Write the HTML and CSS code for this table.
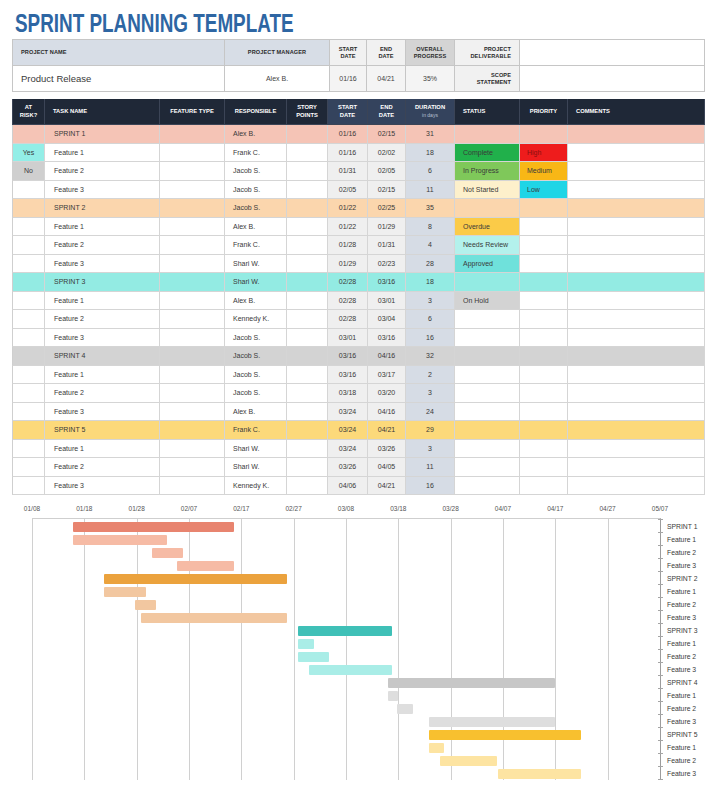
FILE: index.html
```html
<!DOCTYPE html>
<html lang="en">
<head>
<meta charset="utf-8">
<title>Sprint Planning Template</title>
<link rel="stylesheet" href="styles.css">
</head>
<body>
<div class="page">
  <h1 class="title">SPRINT PLANNING TEMPLATE</h1>

  <div class="info">
    <div class="c lbl hb first">PROJECT NAME</div>
    <div class="c lbl hb ctr">PROJECT MANAGER</div>
    <div class="c lbl hl ctr">START<br>DATE</div>
    <div class="c lbl hl ctr">END<br>DATE</div>
    <div class="c lbl hg ctr">OVERALL<br>PROGRESS</div>
    <div class="c lbl hl rgt">PROJECT<br>DELIVERABLE</div>
    <div class="c"></div>
    <div class="c val big first">Product Release</div>
    <div class="c val ctr">Alex B.</div>
    <div class="c val ctr lt">01/16</div>
    <div class="c val ctr lt">04/21</div>
    <div class="c val ctr lt">35%</div>
    <div class="c lbl hl rgt">SCOPE<br>STATEMENT</div>
    <div class="c"></div>
  </div>

  <div class="tbl">
    <div class="tr th">
      <div class="td ctr"><span>AT<br>RISK?</span></div>
      <div class="td"><span>TASK NAME</span></div>
      <div class="td ctr"><span>FEATURE TYPE</span></div>
      <div class="td ctr"><span>RESPONSIBLE</span></div>
      <div class="td ctr"><span>STORY<br>POINTS</span></div>
      <div class="td ctr hd"><span>START<br>DATE</span></div>
      <div class="td ctr hd"><span>END<br>DATE</span></div>
      <div class="td ctr hd"><span>DURATION<br><span class="sub">in days</span></span></div>
      <div class="td"><span>STATUS</span></div>
      <div class="td ctr"><span>PRIORITY</span></div>
      <div class="td"><span>COMMENTS</span></div>
    </div>

    <div class="tr sp1"><div class="td ar"></div><div class="td tn">SPRINT 1</div><div class="td"></div><div class="td">Alex B.</div><div class="td"></div><div class="td dt">01/16</div><div class="td dt">02/15</div><div class="td du">31</div><div class="td"></div><div class="td pr"></div><div class="td"></div></div>
    <div class="tr"><div class="td ar yes">Yes</div><div class="td tn">Feature 1</div><div class="td"></div><div class="td">Frank C.</div><div class="td"></div><div class="td dt">01/16</div><div class="td dt">02/02</div><div class="td du">18</div><div class="td s-complete">Complete</div><div class="td pr p-high">High</div><div class="td"></div></div>
    <div class="tr"><div class="td ar no">No</div><div class="td tn">Feature 2</div><div class="td"></div><div class="td">Jacob S.</div><div class="td"></div><div class="td dt">01/31</div><div class="td dt">02/05</div><div class="td du">6</div><div class="td s-progress">In Progress</div><div class="td pr p-medium">Medium</div><div class="td"></div></div>
    <div class="tr"><div class="td ar"></div><div class="td tn">Feature 3</div><div class="td"></div><div class="td">Jacob S.</div><div class="td"></div><div class="td dt">02/05</div><div class="td dt">02/15</div><div class="td du">11</div><div class="td s-notstarted">Not Started</div><div class="td pr p-low">Low</div><div class="td"></div></div>

    <div class="tr sp2"><div class="td ar"></div><div class="td tn">SPRINT 2</div><div class="td"></div><div class="td">Jacob S.</div><div class="td"></div><div class="td dt">01/22</div><div class="td dt">02/25</div><div class="td du">35</div><div class="td"></div><div class="td pr"></div><div class="td"></div></div>
    <div class="tr"><div class="td ar"></div><div class="td tn">Feature 1</div><div class="td"></div><div class="td">Alex B.</div><div class="td"></div><div class="td dt">01/22</div><div class="td dt">01/29</div><div class="td du">8</div><div class="td s-overdue">Overdue</div><div class="td pr"></div><div class="td"></div></div>
    <div class="tr"><div class="td ar"></div><div class="td tn">Feature 2</div><div class="td"></div><div class="td">Frank C.</div><div class="td"></div><div class="td dt">01/28</div><div class="td dt">01/31</div><div class="td du">4</div><div class="td s-review">Needs Review</div><div class="td pr"></div><div class="td"></div></div>
    <div class="tr"><div class="td ar"></div><div class="td tn">Feature 3</div><div class="td"></div><div class="td">Shari W.</div><div class="td"></div><div class="td dt">01/29</div><div class="td dt">02/23</div><div class="td du">28</div><div class="td s-approved">Approved</div><div class="td pr"></div><div class="td"></div></div>

    <div class="tr sp3"><div class="td ar"></div><div class="td tn">SPRINT 3</div><div class="td"></div><div class="td">Shari W.</div><div class="td"></div><div class="td dt">02/28</div><div class="td dt">03/16</div><div class="td du">18</div><div class="td"></div><div class="td pr"></div><div class="td"></div></div>
    <div class="tr"><div class="td ar"></div><div class="td tn">Feature 1</div><div class="td"></div><div class="td">Alex B.</div><div class="td"></div><div class="td dt">02/28</div><div class="td dt">03/01</div><div class="td du">3</div><div class="td s-hold">On Hold</div><div class="td pr"></div><div class="td"></div></div>
    <div class="tr"><div class="td ar"></div><div class="td tn">Feature 2</div><div class="td"></div><div class="td">Kennedy K.</div><div class="td"></div><div class="td dt">02/28</div><div class="td dt">03/04</div><div class="td du">6</div><div class="td"></div><div class="td pr"></div><div class="td"></div></div>
    <div class="tr"><div class="td ar"></div><div class="td tn">Feature 3</div><div class="td"></div><div class="td">Jacob S.</div><div class="td"></div><div class="td dt">03/01</div><div class="td dt">03/16</div><div class="td du">16</div><div class="td"></div><div class="td pr"></div><div class="td"></div></div>

    <div class="tr sp4"><div class="td ar"></div><div class="td tn">SPRINT 4</div><div class="td"></div><div class="td">Jacob S.</div><div class="td"></div><div class="td dt">03/16</div><div class="td dt">04/16</div><div class="td du">32</div><div class="td"></div><div class="td pr"></div><div class="td"></div></div>
    <div class="tr"><div class="td ar"></div><div class="td tn">Feature 1</div><div class="td"></div><div class="td">Jacob S.</div><div class="td"></div><div class="td dt">03/16</div><div class="td dt">03/17</div><div class="td du">2</div><div class="td"></div><div class="td pr"></div><div class="td"></div></div>
    <div class="tr"><div class="td ar"></div><div class="td tn">Feature 2</div><div class="td"></div><div class="td">Jacob S.</div><div class="td"></div><div class="td dt">03/18</div><div class="td dt">03/20</div><div class="td du">3</div><div class="td"></div><div class="td pr"></div><div class="td"></div></div>
    <div class="tr"><div class="td ar"></div><div class="td tn">Feature 3</div><div class="td"></div><div class="td">Alex B.</div><div class="td"></div><div class="td dt">03/24</div><div class="td dt">04/16</div><div class="td du">24</div><div class="td"></div><div class="td pr"></div><div class="td"></div></div>

    <div class="tr sp5"><div class="td ar"></div><div class="td tn">SPRINT 5</div><div class="td"></div><div class="td">Frank C.</div><div class="td"></div><div class="td dt">03/24</div><div class="td dt">04/21</div><div class="td du">29</div><div class="td"></div><div class="td pr"></div><div class="td"></div></div>
    <div class="tr"><div class="td ar"></div><div class="td tn">Feature 1</div><div class="td"></div><div class="td">Shari W.</div><div class="td"></div><div class="td dt">03/24</div><div class="td dt">03/26</div><div class="td du">3</div><div class="td"></div><div class="td pr"></div><div class="td"></div></div>
    <div class="tr"><div class="td ar"></div><div class="td tn">Feature 2</div><div class="td"></div><div class="td">Shari W.</div><div class="td"></div><div class="td dt">03/26</div><div class="td dt">04/05</div><div class="td du">11</div><div class="td"></div><div class="td pr"></div><div class="td"></div></div>
    <div class="tr"><div class="td ar"></div><div class="td tn">Feature 3</div><div class="td"></div><div class="td">Kennedy K.</div><div class="td"></div><div class="td dt">04/06</div><div class="td dt">04/21</div><div class="td du">16</div><div class="td"></div><div class="td pr"></div><div class="td"></div></div>
  </div>

  <div class="gantt">
    <div class="axis">
      <span>01/08</span><span>01/18</span><span>01/28</span><span>02/07</span><span>02/17</span><span>02/27</span><span>03/08</span><span>03/18</span><span>03/28</span><span>04/07</span><span>04/17</span><span>04/27</span><span>05/07</span>
    </div>
    <div class="chart">
      <div class="plot">
        <div class="grow"><div class="bar b1" style="margin-left:41px;width:161px"></div></div>
        <div class="grow"><div class="bar l1" style="margin-left:41px;width:94px"></div></div>
        <div class="grow"><div class="bar l1" style="margin-left:120px;width:31px"></div></div>
        <div class="grow"><div class="bar l1" style="margin-left:145px;width:57px"></div></div>
        <div class="grow"><div class="bar b2" style="margin-left:72px;width:183px"></div></div>
        <div class="grow"><div class="bar l2" style="margin-left:72px;width:42px"></div></div>
        <div class="grow"><div class="bar l2" style="margin-left:103px;width:21px"></div></div>
        <div class="grow"><div class="bar l2" style="margin-left:109px;width:146px"></div></div>
        <div class="grow"><div class="bar b3" style="margin-left:266px;width:94px"></div></div>
        <div class="grow"><div class="bar l3" style="margin-left:266px;width:16px"></div></div>
        <div class="grow"><div class="bar l3" style="margin-left:266px;width:31px"></div></div>
        <div class="grow"><div class="bar l3" style="margin-left:277px;width:83px"></div></div>
        <div class="grow"><div class="bar b4" style="margin-left:356px;width:167px"></div></div>
        <div class="grow"><div class="bar l4" style="margin-left:356px;width:10px"></div></div>
        <div class="grow"><div class="bar l4" style="margin-left:365px;width:16px"></div></div>
        <div class="grow"><div class="bar l4" style="margin-left:397px;width:126px"></div></div>
        <div class="grow"><div class="bar b5" style="margin-left:397px;width:152px"></div></div>
        <div class="grow"><div class="bar l5" style="margin-left:397px;width:15px"></div></div>
        <div class="grow"><div class="bar l5" style="margin-left:408px;width:57px"></div></div>
        <div class="grow"><div class="bar l5" style="margin-left:466px;width:83px"></div></div>
      </div>
      <div class="names">
        <div>SPRINT 1</div><div>Feature 1</div><div>Feature 2</div><div>Feature 3</div>
        <div>SPRINT 2</div><div>Feature 1</div><div>Feature 2</div><div>Feature 3</div>
        <div>SPRINT 3</div><div>Feature 1</div><div>Feature 2</div><div>Feature 3</div>
        <div>SPRINT 4</div><div>Feature 1</div><div>Feature 2</div><div>Feature 3</div>
        <div>SPRINT 5</div><div>Feature 1</div><div>Feature 2</div><div>Feature 3</div>
      </div>
    </div>
  </div>
</div>
</body>
</html>
```

FILE: styles.css
```css
* { box-sizing: border-box; }

body {
  margin: 0;
  background: #ffffff;
  font-family: "Liberation Sans", Arial, sans-serif;
  color: #333;
}

.page {
  width: 720px;
  padding: 9px 0 0 12px;
}

.title {
  margin: 0 0 2px 3px;
  font-size: 25px;
  line-height: 28px;
  font-weight: 700;
  color: #2e66a3;
  white-space: nowrap;
  transform: scaleX(0.755);
  transform-origin: 0 0;
}

/* ---------- project info table ---------- */
.info {
  display: grid;
  grid-template-columns: 213px 105px 37px 39px 49px 65px 185px;
  grid-template-rows: 26px 26px;
  width: 693px;
  border-top: 1px solid #c6c6c6;
}

.info .c {
  display: flex;
  align-items: center;
  padding: 0 8px;
  border-right: 1px solid #c6c6c6;
  border-bottom: 1px solid #c6c6c6;
  background: #fff;
}

.info .first { border-left: 1px solid #c6c6c6; }

.info .lbl {
  font-size: 5.6px;
  font-weight: 700;
  line-height: 1.2;
  color: #2b2b2b;
  letter-spacing: 0.1px;
}

.info .hb { background: #d7dde6; }
.info .hl { background: #f1f1f1; }
.info .hg { background: #d4d4d4; }
.info .lt { background: #f4f4f4; }

.info .ctr { justify-content: center; text-align: center; }
.info .rgt { justify-content: flex-end; text-align: right; }

.info .val {
  font-size: 7px;
  color: #444;
}

.info .big {
  font-size: 9.5px;
  color: #3a3a3a;
}

/* ---------- main task table ---------- */
.tbl {
  margin-top: 7px;
  width: 693px;
}

.tr {
  display: grid;
  grid-template-columns: 33px 115px 65px 62px 41px 40px 38px 49px 65px 48px 137px;
  height: 18.5px;
}

.td {
  display: flex;
  align-items: center;
  padding: 0 8px;
  border-right: 1px solid #d5d5d5;
  border-bottom: 1px solid #d5d5d5;
  font-size: 7px;
  color: #3a3a3a;
  white-space: nowrap;
  overflow: hidden;
  background: #fff;
}

.td:first-child { border-left: 1px solid #cfcfcf; }

.td.ctr { justify-content: center; text-align: center; }
.td.ar { justify-content: center; padding: 0; }
.td.tn { padding-left: 9px; }
.td.dt { justify-content: center; padding: 0; background: #efefef; }
.td.du { justify-content: center; padding: 0; background: #d6dce5; }
.td.pr { padding-left: 7px; }

.th { height: 26px; }
.th .td {
  background: #1f2837;
  color: #fff;
  font-size: 5.8px;
  font-weight: 700;
  line-height: 1.3;
  border-color: #3b4456;
}
.th .td.hd { background: #34435d; }
.th .sub {
  font-weight: 400;
  font-size: 5px;
  color: #b8c2d3;
}

.tr.sp1 .td { background: #f5c4b6; }
.tr.sp2 .td { background: #fbd6ad; }
.tr.sp3 .td { background: #93ebe3; }
.tr.sp4 .td { background: #d3d3d3; }
.tr.sp5 .td { background: #fcd97a; }

.td.yes { background: #93eee7; }
.td.no { background: #cfcfcf; }

.td.s-complete { background: #21b04b; }
.td.s-progress { background: #7fc85a; }
.td.s-notstarted { background: #fdf0cb; }
.td.s-overdue { background: #fbcb48; }
.td.s-review { background: #b3f1ec; }
.td.s-approved { background: #6fe1db; }
.td.s-hold { background: #d3d3d3; }

.td.p-high { background: #ee1c1c; color: #8a1010; }
.td.p-medium { background: #f8b716; }
.td.p-low { background: #1fd5e6; }

/* ---------- gantt chart ---------- */
.gantt {
  padding-left: 20px;
}

.axis {
  display: flex;
  margin-left: -26.17px;
  height: 23px;
  padding-top: 9px;
}

.axis span {
  flex: 0 0 52.333px;
  text-align: center;
  font-size: 6.5px;
  line-height: 10px;
  color: #555;
}

.chart {
  display: flex;
}

.plot {
  position: relative;
  width: 629px;
  height: 262px;
  padding-top: 1px;
  border-top: 1px solid #cfcfcf;
  border-right: 1px solid #9c9c9c;
  background-image: repeating-linear-gradient(to right, #d0d0d0 0, #d0d0d0 1px, transparent 1px, transparent 52.333px);
}

.plot::after {
  content: "";
  position: absolute;
  right: -3px;
  top: 0;
  width: 5px;
  height: 262px;
  background-image: repeating-linear-gradient(to bottom, #a5a5a5 0, #a5a5a5 1px, transparent 1px, transparent 13px);
}

.grow {
  height: 13px;
  padding-top: 1.5px;
}

.bar {
  height: 10px;
  border-radius: 1px;
}

.b1 { background: #e8846f; }
.l1 { background: #f6bba5; }
.b2 { background: #eba23d; }
.l2 { background: #f2c7a0; }
.b3 { background: #3fc0b7; }
.l3 { background: #a9ede7; }
.b4 { background: #c7c7c7; }
.l4 { background: #dedede; }
.b5 { background: #f8c02f; }
.l5 { background: #fde4a2; }

.names {
  padding: 2px 0 0 6px;
}

.names div {
  height: 13px;
  line-height: 13px;
  font-size: 6.8px;
  color: #3a3a3a;
  white-space: nowrap;
}
```
